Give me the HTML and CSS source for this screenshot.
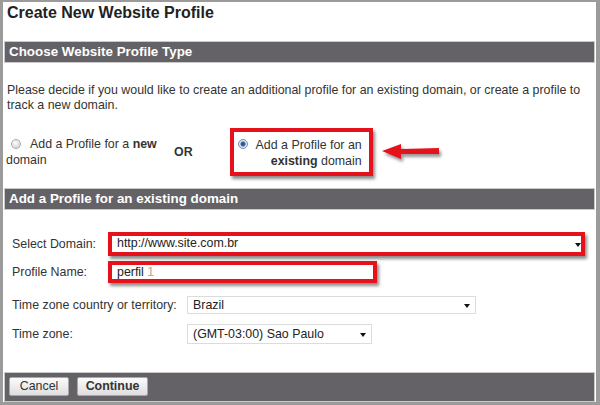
FILE: index.html
```html
<!DOCTYPE html>
<html>
<head>
<meta charset="utf-8">
<title>Create New Website Profile</title>
<link rel="stylesheet" href="styles.css">
</head>
<body>
<div class="frame">
  <h1 class="title">Create New Website Profile</h1>
  <div class="bar bar1">Choose Website Profile Type</div>
  <p class="intro">Please decide if you would like to create an additional profile for an existing domain, or create a profile to<br>track a new domain.</p>
  <div class="choice">
    <div class="opt-new"><span class="radio"></span>Add a Profile for a <b>new</b><br>domain</div>
    <div class="or">OR</div>
    <div class="opt-existing hl"><span class="radio checked"></span><span class="opt-text">Add a Profile for an<br><b>existing</b> domain</span></div>
    <svg class="arrow" width="60" height="16" viewBox="0 0 60 16"><polygon points="0,7 19,0 19,5 57,4 57,10 19,10 19,15" fill="#e5121b"/></svg>
  </div>
  <div class="bar bar2">Add a Profile for an existing domain</div>
  <div class="form">
    <div class="row row1">
      <span class="label label-short">Select Domain:</span>
      <div class="hl hl-domain"><div class="field">http://www.site.com.br<span class="caret"></span></div></div>
    </div>
    <div class="row row2">
      <span class="label label-short">Profile Name:</span>
      <div class="hl hl-name"><div class="field">perfil <span class="faint">1</span></div></div>
    </div>
    <div class="row row3">
      <span class="label label-long">Time zone country or territory:</span>
      <div class="select select-country">Brazil<span class="caret"></span></div>
    </div>
    <div class="row row4">
      <span class="label label-long">Time zone:</span>
      <div class="select select-zone">(GMT-03:00) Sao Paulo<span class="caret"></span></div>
    </div>
  </div>
  <div class="footer">
    <button class="btn btn-cancel">Cancel</button>
    <button class="btn btn-continue">Continue</button>
  </div>
</div>
</body>
</html>
```
FILE: styles.css
```css
* { box-sizing: border-box; }
html, body { margin: 0; padding: 0; background: #fff; }
body {
  font-family: "Liberation Sans", Arial, sans-serif;
  font-size: 12.4px;
  color: #333;
}
.frame {
  width: 600px;
  height: 405px;
  border-style: solid;
  border-color: #9b9b9b;
  border-width: 2px 4px 3px 3px;
  background: #fff;
  overflow: hidden;
}
.title {
  margin: 0;
  padding: 2px 0 0 4px;
  font-size: 16px;
  line-height: 18px;
  font-weight: bold;
  color: #222;
}
.bar {
  margin: 0 0 0 1px;
  width: 591px;
  height: 22px;
  border: 1px solid #c9c9c9;
  background: #646266;
  color: #fff;
  font-weight: bold;
  font-size: 13.4px;
  line-height: 20px;
  padding-left: 4px;
}
.bar1 { margin-top: 19px; }
.bar2 { margin-top: 12px; }
.intro {
  margin: 20px 0 0 0;
  padding-left: 4px;
  line-height: 15px;
}
.choice {
  margin-top: 15px;
  display: flex;
  align-items: center;
  height: 48px;
}
.opt-new {
  margin-left: 3px;
  width: 160px;
  line-height: 16px;
  color: #333;
}
.radio {
  display: inline-block;
  width: 10px;
  height: 10px;
  border-radius: 50%;
  border: 1px solid #a9a9a9;
  background: radial-gradient(circle at 40% 35%, #fafafa, #d0d0d0);
  vertical-align: -1px;
  margin: 0 9px 0 5px;
}
.radio.checked {
  border-color: #7a8ea8;
  background: radial-gradient(circle at 50% 50%, #1f4f8f 0, #2e6db3 2px, #d6dde6 3px, #f3f3f3 5px);
}
.or {
  margin-left: 8px;
  font-weight: bold;
}
.hl {
  border: 4px solid #e5121b;
  box-shadow: 2px 3px 3px rgba(0, 0, 0, 0.45);
  background: #fff;
}
.opt-existing {
  margin-left: 37px;
  width: 143px;
  height: 48px;
  display: flex;
  align-items: flex-start;
  padding: 5px 0 0 0;
}
.opt-existing .radio { margin: 2px 0 0 4px; flex: none; }
.opt-text {
  margin-left: 8px;
  text-align: right;
  line-height: 16px;
}
.arrow {
  margin-left: 9px;
  filter: drop-shadow(2px 3px 1.5px rgba(0, 0, 0, 0.4));
}
.form { padding-left: 9px; }
.row {
  display: flex;
  align-items: center;
}
.label { flex: none; }
.label-short { width: 96px; }
.label-long { width: 175px; }
.row1 { margin-top: 22px; }
.row2 { margin-top: 5px; }
.row3 { margin-top: 13px; }
.row4 { margin-top: 10px; }
.hl-domain { width: 477px; height: 24px; }
.hl-name { width: 269px; height: 22px; }
.field {
  position: relative;
  height: 100%;
  padding-left: 5px;
  line-height: 15px;
  color: #222;
}
.faint { color: #b9a98a; }
.select {
  position: relative;
  border: 1px solid #dcdcdc;
  padding-left: 5px;
  color: #222;
  background: #fff;
}
.select-country { width: 289px; height: 18px; line-height: 16px; }
.select-zone { width: 185px; height: 20px; line-height: 18px; }
.caret {
  position: absolute;
  top: 50%;
  margin-top: -1px;
  width: 0;
  height: 0;
  border-left: 3.5px solid transparent;
  border-right: 3.5px solid transparent;
  border-top: 4px solid #111;
}
.hl-domain .caret { right: 0; }
.select-country .caret { right: 5px; }
.select-zone .caret { right: 5px; }
.footer {
  margin: 28px 0 0 1px;
  width: 591px;
  height: 30px;
  border: 1px solid #c9c9c9;
  background: #646266;
  display: flex;
  align-items: flex-start;
  gap: 8px;
  padding: 4px 0 0 4px;
}
.btn {
  font-family: "Liberation Sans", Arial, sans-serif;
  font-size: 12.4px;
  color: #333;
  height: 19px;
  padding: 0;
  border: 1px solid #a8a8a8;
  border-radius: 2px;
  background: linear-gradient(#fbfbfb, #dedede);
  line-height: 17px;
}
.btn-cancel { width: 60px; }
.btn-continue { width: 71px; font-weight: bold; }
```
